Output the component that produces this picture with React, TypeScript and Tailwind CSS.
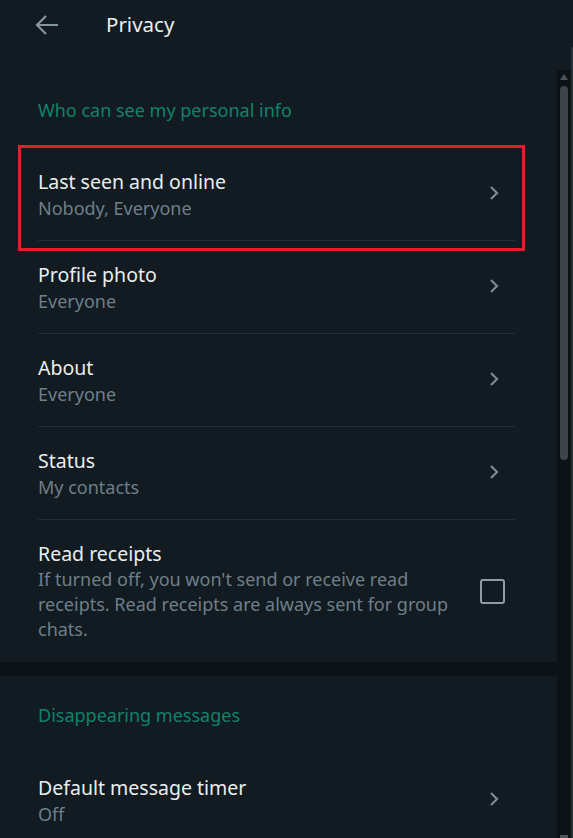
import React from 'react'

type Row = {
  title: string
  sub?: string
  kind: 'chevron' | 'checkbox'
  last?: boolean
  boxed?: boolean
}

const font = { fontFamily: '"Noto Sans", "Open Sans", sans-serif' }

function Chevron() {
  return (
    <svg width="10" height="16" viewBox="0 0 10 16" className="mr-[16px] mb-[5px] shrink-0">
      <path d="M2 2 L8 8 L2 14" fill="none" stroke="#7a8a93" strokeWidth="2.2" />
    </svg>
  )
}

function Checkbox() {
  return <div className="w-[25px] h-[25px] mr-[10px] shrink-0 rounded-[3px] border-2 border-[#8f9ca4]" />
}

function SettingRow({ row }: { row: Row }) {
  const multi = row.kind === 'checkbox'
  return (
    <div className="relative">
      {row.boxed && (
        <div className="absolute left-[-20px] right-[-10px] top-[-3px] bottom-[-10px] border-[3px] border-[#e21f2b] pointer-events-none" />
      )}
      <div className={`flex items-center pt-[20px] ${row.last ? 'pb-[20px]' : 'pb-[18px] border-b border-[#222d34]'}`}>
        <div className="flex-1">
          <p className="text-[19.5px] leading-[27px] text-[#e9edef]">{row.title}</p>
          {row.sub && (
            <p className={`text-[18px] ${multi ? 'leading-[25px]' : 'leading-[27px]'} text-[#6f7f88] max-w-[425px]`}>{row.sub}</p>
          )}
        </div>
        {row.kind === 'chevron' ? <Chevron /> : <Checkbox />}
      </div>
    </div>
  )
}

const personal: Row[] = [
  { title: 'Last seen and online', sub: 'Nobody, Everyone', kind: 'chevron', boxed: true },
  { title: 'Profile photo', sub: 'Everyone', kind: 'chevron' },
  { title: 'About', sub: 'Everyone', kind: 'chevron' },
  { title: 'Status', sub: 'My contacts', kind: 'chevron' },
  {
    title: 'Read receipts',
    sub: "If turned off, you won't send or receive read receipts. Read receipts are always sent for group chats.",
    kind: 'checkbox',
    last: true,
  },
]

export default function App() {
  return (
    <div className="w-[573px] h-[838px] overflow-hidden bg-[#111b21] flex" style={font}>
      <div className="w-[571px] flex flex-col">
        {/* header */}
        <div className="h-[70px] shrink-0 flex items-start pt-[11px]">
          <svg width="26" height="24" viewBox="0 0 26 24" className="ml-[34px] mt-[2px]">
            <path d="M24 12 H4 M12 3 L3 12 L12 21" fill="none" stroke="#8696a0" strokeWidth="2.2" />
          </svg>
          <h1 className="ml-[46px] text-[20.5px] leading-[26px] text-[#e9edef]">Privacy</h1>
        </div>

        <div className="flex flex-1 min-h-0">
          <div className="flex-1 flex flex-col">
            {/* personal info */}
            <div className="pl-[38px] pr-[42px] pt-[28px]">
              <h2 className="text-[18px] leading-[24px] text-[#12826b] mb-[26px]">Who can see my personal info</h2>
              {personal.map(r => (
                <SettingRow key={r.title} row={r} />
              ))}
            </div>

            <div className="h-[14px] shrink-0 bg-[#0c1317]" />

            {/* disappearing */}
            <div className="pl-[38px] pr-[42px] pt-[27px]">
              <h2 className="text-[18px] leading-[24px] text-[#12826b] mb-[27px]">Disappearing messages</h2>
              <SettingRow row={{ title: 'Default message timer', sub: 'Off', kind: 'chevron', last: true }} />
            </div>
          </div>

          {/* scrollbar */}
          <div className="w-[14px] bg-[#0c1317] flex flex-col items-center">
            <svg width="10" height="8" viewBox="0 0 10 8" className="mt-[3px]">
              <path d="M5 1 L9 7 H1 Z" fill="#4b555b" />
            </svg>
            <div className="w-[8px] h-[374px] mt-[5px] rounded-full bg-[#3d454a]" />
            <div className="flex-1" />
            <div className="w-[8px] h-[3px] bg-[#4b555b]" />
          </div>
        </div>
      </div>
      <div className="w-[2px] mt-[47px] bg-[#26333a]" />
    </div>
  )
}
